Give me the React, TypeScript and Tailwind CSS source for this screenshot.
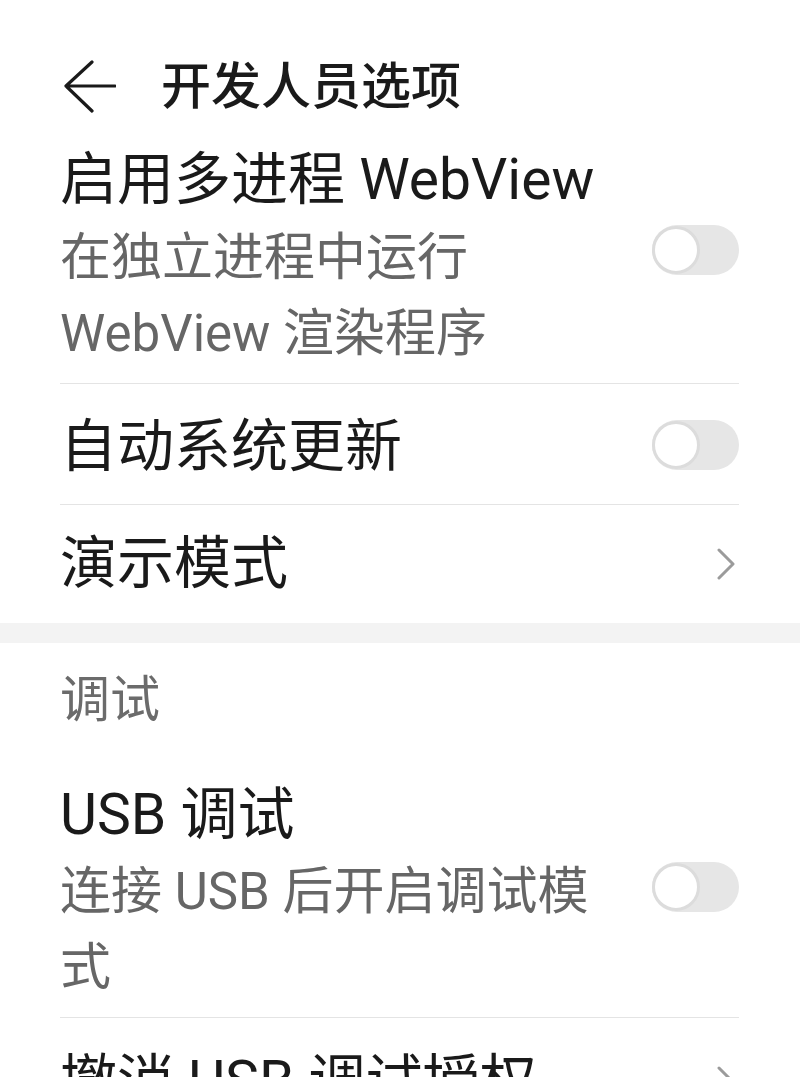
import React from 'react';

function Toggle({ className = '' }: { className?: string }) {
  return (
    <div className={`flex h-[50px] w-[87px] shrink-0 items-center rounded-full bg-[#e6e6e6] ${className}`}>
      <div className="h-[48px] w-[48px] rounded-full border-[3px] border-[#dcdcdc] bg-white" />
    </div>
  );
}

function Chevron() {
  return (
    <svg width="18" height="32" viewBox="0 0 18 32" className="mr-[4px] shrink-0" fill="none">
      <path d="M2 2 L16 16 L2 30" stroke="#9b9b9b" strokeWidth="3" strokeLinecap="round" strokeLinejoin="round" />
    </svg>
  );
}

export default function App() {
  return (
    <div className="min-h-screen bg-white font-['Roboto','Noto_Sans_CJK_SC',sans-serif] text-[#1a1a1a]">
      <header className="mt-[37px] flex h-[100px] items-center pl-[64px]">
        <svg width="52" height="54" viewBox="0 0 52 54" fill="none">
          <path d="M28 2 L2 26 L28 51 M2 26 H51" stroke="#1a1a1a" strokeWidth="3.2" strokeLinecap="round" strokeLinejoin="round" />
        </svg>
        <h1 className="ml-[45px] text-[50px] font-medium leading-none">开发人员选项</h1>
      </header>

      <div className="ml-[60px] mr-[61px]">
        <div className="flex items-center justify-between border-b border-[#e4e4e4] pb-[11px] pt-[5px]">
          <div>
            <div className="text-[57px] leading-[76px]">启用多进程 WebView</div>
            <div className="mt-[2px] text-[51px] leading-[76px] text-[#666666]">
              在独立进程中运行
              <br />
              WebView 渲染程序
            </div>
          </div>
          <Toggle className="mb-[14px]" />
        </div>

        <div className="flex h-[121px] items-center justify-between border-b border-[#e4e4e4] pt-[5px]">
          <div className="text-[57px] leading-[76px]">自动系统更新</div>
          <Toggle className="mb-[4px]" />
        </div>

        <div className="flex h-[118px] items-center justify-between">
          <div className="text-[57px] leading-[76px]">演示模式</div>
          <Chevron />
        </div>
      </div>

      <div className="h-[20px] bg-[#f3f3f3]" />

      <div className="ml-[60px] mr-[61px]">
        <div className="flex h-[114px] items-center text-[50px] text-[#6b6b6b]">调试</div>

        <div className="flex items-center justify-between border-b border-[#e4e4e4] pb-[11px] pt-[20px]">
          <div>
            <div className="text-[57px] leading-[76px]">USB 调试</div>
            <div className="mt-[1px] text-[51px] leading-[76px] text-[#666666]">
              连接 USB 后开启调试模
              <br />
              式
            </div>
          </div>
          <Toggle className="mb-[10px]" />
        </div>

        <div className="flex h-[121px] items-center justify-between pt-[6px]">
          <div className="text-[57px] leading-[76px]">撤消 USB 调试授权</div>
          <Chevron />
        </div>
      </div>
    </div>
  );
}
